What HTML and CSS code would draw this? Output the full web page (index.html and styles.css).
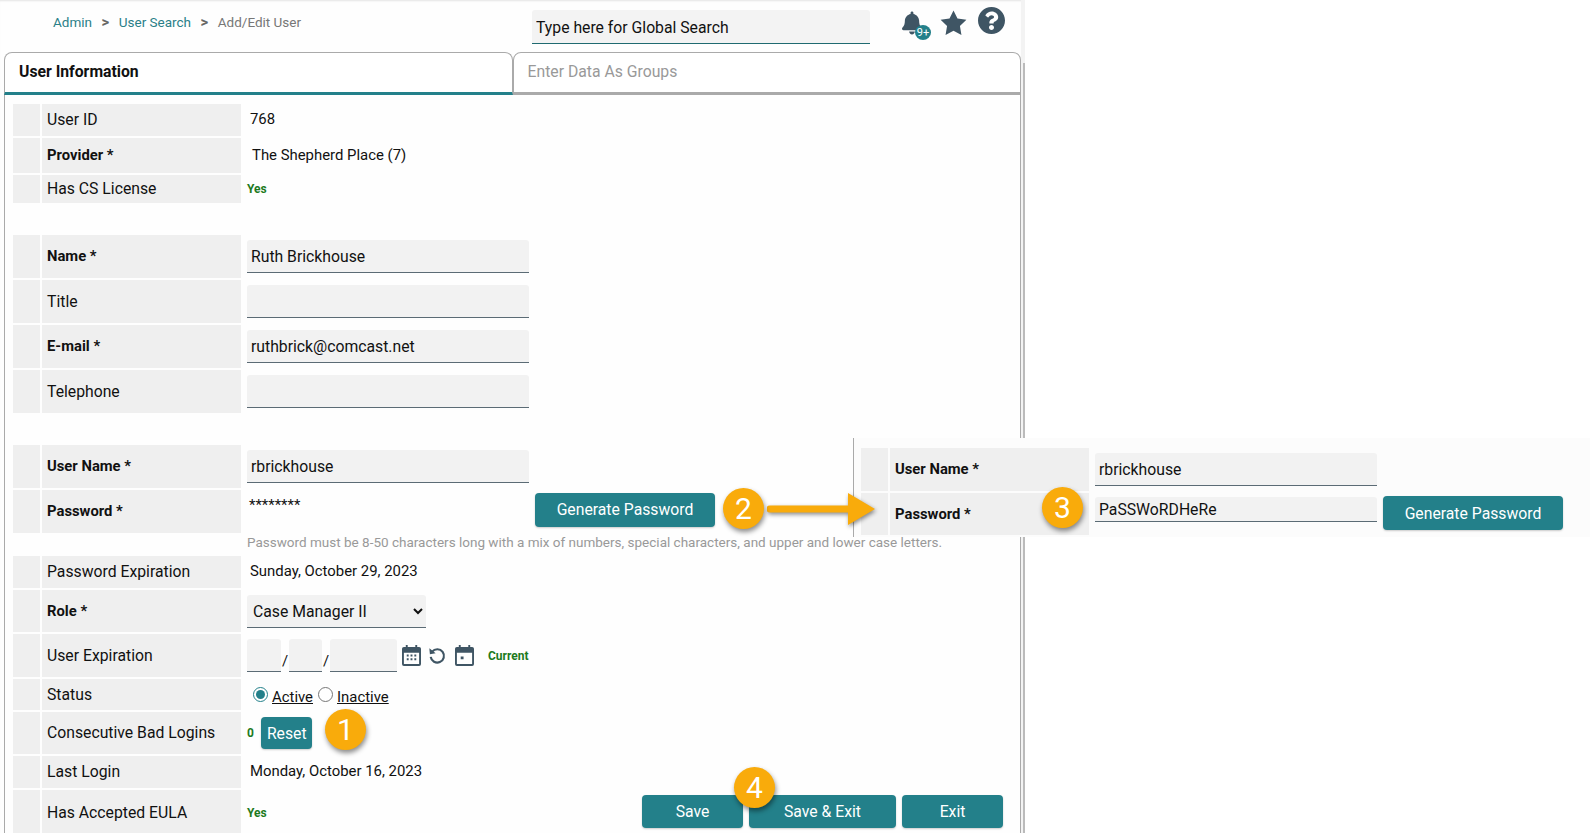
FILE: index.html
```html
<!DOCTYPE html>
<html lang="en">
<head>
    <meta charset="UTF-8">
    <meta name="viewport" content="width=device-width, initial-scale=1.0">
    <title>Add/Edit User</title>
    <link rel="stylesheet" href="styles.css">
</head>
<body>
    <div class="app">
        <header class="topbar">
            <nav class="crumbs">
                <a>Admin</a><b>&gt;</b><a>User Search</a><b>&gt;</b><span>Add/Edit User</span>
            </nav>
            <input class="global-search" type="text" value="Type here for Global Search">
            <div class="top-icons">
                <span class="bell">
                    <svg class="icon-bell" viewBox="0 0 448 512"><path d="M224 512c35.32 0 63.97-28.65 63.97-64H160.03c0 35.35 28.65 64 63.97 64zm215.39-149.71c-19.32-20.76-55.47-51.99-55.47-154.29 0-77.7-54.48-139.9-127.94-155.16V32c0-17.67-14.32-32-31.98-32s-31.98 14.33-31.98 32v20.84C118.56 68.1 64.08 130.3 64.08 208c0 102.3-36.15 133.53-55.47 154.29-6 6.45-8.66 14.16-8.61 21.71.11 16.4 12.98 32 32.1 32h383.8c19.12 0 32-15.6 32.1-32 .05-7.55-2.61-15.27-8.61-21.71z"/></svg>
                    <i class="bell-count">9+</i>
                </span>
                <svg class="icon-star" viewBox="0 0 576 512"><path d="M288 6L367 166 544 192 416 316 446 494 288 410 130 494 160 316 32 192 209 166z"/></svg>
                <svg class="icon-help" viewBox="8 8 496 496"><path d="M504 256c0 136.997-111.043 248-248 248S8 392.997 8 256C8 119.083 119.043 8 256 8s248 111.083 248 248zM262.655 90c-54.497 0-89.255 22.957-116.549 63.758-3.536 5.286-2.353 12.415 2.715 16.258l34.699 26.31c5.205 3.947 12.621 3.008 16.665-2.122 17.864-22.658 30.113-35.797 57.303-35.797 20.429 0 45.698 13.148 45.698 32.958 0 14.976-12.363 22.667-32.534 33.976C247.128 238.528 216 254.941 216 296v4c0 6.627 5.373 12 12 12h56c6.627 0 12-5.373 12-12v-1.333c0-28.462 83.186-29.647 83.186-106.667 0-58.002-60.165-102-116.531-102zM256 338c-25.365 0-46 20.635-46 46 0 25.364 20.635 46 46 46s46-20.636 46-46c0-25.365-20.635-46-46-46z"/></svg>
            </div>
        </header>

        <div class="tabs">
            <div class="tab active">User Information</div>
            <div class="tab">Enter Data As Groups</div>
        </div>

        <main class="panel">
            <div class="row h32">
                <div class="stub"></div><div class="label">User ID</div>
                <div class="value text">768</div>
            </div>
            <div class="row h35">
                <div class="stub"></div><div class="label req">Provider *</div>
                <div class="value text provider">The Shepherd Place (7)</div>
            </div>
            <div class="row h28">
                <div class="stub"></div><div class="label">Has CS License</div>
                <div class="value"><span class="flag">Yes</span></div>
            </div>

            <div class="section">
                <div class="row h43">
                    <div class="stub"></div><div class="label req">Name *</div>
                    <div class="value"><input class="field" type="text" value="Ruth Brickhouse"></div>
                </div>
                <div class="row h43">
                    <div class="stub"></div><div class="label">Title</div>
                    <div class="value"><input class="field" type="text"></div>
                </div>
                <div class="row h43">
                    <div class="stub"></div><div class="label req">E-mail *</div>
                    <div class="value"><input class="field" type="text" value="ruthbrick@comcast.net"></div>
                </div>
                <div class="row h43">
                    <div class="stub"></div><div class="label">Telephone</div>
                    <div class="value"><input class="field" type="text"></div>
                </div>
            </div>

            <div class="section">
                <div class="row h43">
                    <div class="stub"></div><div class="label req">User Name *</div>
                    <div class="value"><input class="field" type="text" value="rbrickhouse"></div>
                </div>
                <div class="row h43">
                    <div class="stub"></div><div class="label req">Password *</div>
                    <div class="value">
                        <span class="masked">********</span>
                        <button class="btn btn-generate">Generate Password</button>
                    </div>
                </div>
                <p class="hint">Password must be 8-50 characters long with a mix of numbers, special characters, and upper and lower case letters.</p>
                <div class="row h32">
                    <div class="stub"></div><div class="label">Password Expiration</div>
                    <div class="value text">Sunday, October 29, 2023</div>
                </div>
                <div class="row h42">
                    <div class="stub"></div><div class="label req">Role *</div>
                    <div class="value">
                        <select class="field role-select"><option>Case Manager II</option></select>
                    </div>
                </div>
                <div class="row h43">
                    <div class="stub"></div><div class="label">User Expiration</div>
                    <div class="value">
                        <input class="field date-part" type="text">
                        <span class="slash">/</span>
                        <input class="field date-part" type="text">
                        <span class="slash">/</span>
                        <input class="field date-year" type="text">
                        <svg class="date-icon cal-1" viewBox="0 0 20 22">
                            <path d="M4 0h2v3H4zM14 0h2v3h-2z"/>
                            <path fill-rule="evenodd" d="M2 2h16a2 2 0 0 1 2 2v16a2 2 0 0 1-2 2H2a2 2 0 0 1-2-2V4a2 2 0 0 1 2-2zM2 8v12h16V8zM5 10h2v2H5zM9 10h2v2H9zM13 10h2v2h-2zM5 14h2v2H5zM9 14h2v2H9zM13 14h2v2h-2z"/>
                        </svg>
                        <svg class="date-icon undo" viewBox="0 0 20 20">
                            <path class="undo-arc" d="M4.6 5.2A7.4 7.4 0 1 1 3 11"/>
                            <path d="M1.500 1.500l.6 6.600 6.400-1.200z"/>
                        </svg>
                        <svg class="date-icon cal-2" viewBox="0 0 20 22">
                            <path d="M4 0h2v3H4zM14 0h2v3h-2z"/>
                            <path fill-rule="evenodd" d="M2 2h16a2 2 0 0 1 2 2v16a2 2 0 0 1-2 2H2a2 2 0 0 1-2-2V4a2 2 0 0 1 2-2zM2 8v12h16V8zM6 12h3v3H6z"/>
                        </svg>
                        <span class="flag current">Current</span>
                    </div>
                </div>
                <div class="row h31">
                    <div class="stub"></div><div class="label">Status</div>
                    <div class="value status">
                        <input type="radio" name="status" checked><u>Active</u>
                        <input type="radio" name="status"><u>Inactive</u>
                    </div>
                </div>
                <div class="row h42">
                    <div class="stub"></div><div class="label">Consecutive Bad Logins</div>
                    <div class="value">
                        <span class="flag">0</span>
                        <button class="btn btn-reset">Reset</button>
                    </div>
                </div>
                <div class="row h32">
                    <div class="stub"></div><div class="label">Last Login</div>
                    <div class="value text">Monday, October 16, 2023</div>
                </div>
                <div class="row h45">
                    <div class="stub"></div><div class="label">Has Accepted EULA</div>
                    <div class="value">
                        <span class="flag">Yes</span>
                        <div class="actions">
                            <button class="btn btn-save">Save</button>
                            <button class="btn btn-save-exit">Save &amp; Exit</button>
                            <button class="btn btn-save">Exit</button>
                        </div>
                    </div>
                </div>
            </div>
        </main>
    </div>

    <div class="scroll-strip"><div class="scroll-thumb"></div></div>

    <!-- annotation overlay: what the password row looks like after Generate -->
    <div class="callout">
        <div class="row h43">
            <div class="stub"></div><div class="label req">User Name *</div>
            <div class="value"><input class="field" type="text" value="rbrickhouse"></div>
        </div>
        <div class="row h42">
            <div class="stub"></div><div class="label req">Password *</div>
            <div class="value">
                <input class="field field-short" type="text" value="PaSSWoRDHeRe">
                <button class="btn btn-generate">Generate Password</button>
            </div>
        </div>
    </div>

    <svg class="arrow" viewBox="0 0 108 36">
        <path d="M3 14.500h78V2l27 16-27 16V21.500H3a3.500 3.500 0 0 1 0-7z"/>
    </svg>
    <span class="step step-1">1</span>
    <span class="step step-2">2</span>
    <span class="step step-3">3</span>
    <span class="step step-4">4</span>
</body>
</html>
```

FILE: styles.css
```css
* {
    box-sizing: border-box;
}
html, body {
    height: 100%;
}
body {
    margin: 0;
    background: #fff;
    color: #111;
    font-family: Roboto, "Liberation Sans", sans-serif;
    font-size: 15.75px;
    overflow: hidden;
    display: flex;
}
.app {
    width: 1021px;
    flex: none;
    padding-left: 4px;
    background: #fefefe;
    box-shadow: inset 0 2px 2px -1px #e4e4e4;
}
.topbar {
    height: 52px;
    display: flex;
    align-items: flex-start;
}
.crumbs {
    width: 528px;
    padding: 14px 0 0 49px;
    font-size: 13.5px;
    line-height: 16px;
    color: #2a7f88;
}
.crumbs b {
    margin: 0 9.500px;
    font-size: 15px;
    font-weight: 700;
    color: #666;
}
.crumbs span {
    color: #777;
}
.global-search {
    width: 338px;
    height: 34px;
    margin-top: 10px;
    padding: 2px 4px 0;
    border: 0;
    border-bottom: 1px solid #1f6a70;
    border-radius: 3px 3px 0 0;
    background: #f3f3f3;
    font: 15.75px Roboto, sans-serif;
    color: #111;
}
.top-icons {
    display: flex;
    align-items: flex-start;
    margin-left: 32px;
    fill: #3f5564;
}
.bell {
    position: relative;
    width: 20px;
    height: 30px;
    margin-top: 10px;
}
.icon-bell {
    width: 20px;
    height: 26px;
    display: block;
}
.bell-count {
    position: absolute;
    left: 13px;
    top: 15px;
    width: 16px;
    height: 15px;
    border-radius: 50%;
    background: #23808a;
    color: #fff;
    font-size: 11px;
    font-style: normal;
    line-height: 15px;
    text-align: center;
}
.icon-star {
    width: 29px;
    height: 26px;
    margin: 10px 0 0 17px;
}
.icon-help {
    width: 27px;
    height: 27px;
    margin: 7px 0 0 10px;
}
.tabs {
    display: flex;
    height: 43px;
}
.tab {
    flex: 1;
    padding: 9px 14px 0;
    border: 1px solid #aaa;
    border-bottom: 3px solid #aaa;
    border-radius: 8px 8px 0 0;
    background: #fff;
    color: #999;
    line-height: 20px;
}
.tab.active {
    border-bottom-color: #23808a;
    color: #111;
    font-weight: 700;
}
.panel {
    padding: 9px 0 0 8px;
    border-left: 1px solid #aaa;
    border-right: 1px solid #aaa;
    height: 740px;
}
.section {
    margin-top: 32px;
}
.row {
    display: grid;
    grid-template-columns: 27px 199px 1fr;
    column-gap: 2px;
    margin-bottom: 2px;
}
.h28 { height: 28px; }
.h31 { height: 31px; }
.h32 { height: 32px; }
.h35 { height: 35px; }
.h42 { height: 42px; }
.h43 { height: 43px; }
.h45 { height: 45px; }
.stub {
    background: #efefef;
}
.label {
    display: flex;
    align-items: center;
    padding: 0 0 1px 5px;
    background: #efefef;
}
.label.req {
    font-size: 14.8px;
    font-weight: 700;
}
.value {
    display: flex;
    align-items: center;
    padding-left: 4px;
    font-size: 14.9px;
}
.value.text {
    padding-left: 7px;
    padding-bottom: 2px;
}
.value.provider {
    padding-left: 9px;
}
.field {
    width: 282px;
    height: 33px;
    padding: 0 4px;
    border: 0;
    border-bottom: 1px solid #5b6b75;
    border-radius: 3px 3px 0 0;
    background: #f2f2f2;
    font: 15.75px Roboto, sans-serif;
    color: #111;
}
.role-select {
    width: 179px;
    padding: 1px 0 0 2px;
}
.masked {
    width: 282px;
    padding-left: 2px;
    margin-bottom: 14px;
}
.btn {
    height: 33px;
    border: 0;
    border-radius: 4px;
    background: #23808a;
    color: #fff;
    font: 15.75px Roboto, sans-serif;
    box-shadow: 0 1px 2px rgba(0, 0, 0, .2);
}
.btn-generate {
    width: 180px;
    height: 34px;
    margin: 0 0 4px 6px;
}
.btn-reset {
    width: 51px;
    height: 32px;
    margin-left: 7px;
}
.flag {
    color: #1d7a1d;
    font-size: 12px;
    font-weight: 700;
}
.hint {
    margin: 0 0 4px 234px;
    height: 17px;
    line-height: 15px;
    font-size: 13.5px;
    color: #999;
    white-space: nowrap;
}
.slash {
    width: 8px;
    text-align: center;
    margin-top: 10px;
}
.date-part {
    width: 34px;
}
.date-part + .slash + .date-part {
    width: 33px;
}
.date-year {
    width: 67px;
}
.date-icon {
    width: 19px;
    height: 21px;
    fill: #3f5564;
}
.cal-1 {
    margin-left: 5px;
}
.undo {
    width: 18px;
    height: 18px;
    margin-left: 7px;
}
.cal-2 {
    margin-left: 9px;
}
.undo-arc {
    fill: none;
    stroke: #3f5564;
    stroke-width: 2.4;
}
.current {
    margin-left: 14px;
}
.status {
    padding-left: 10px;
}
.status input {
    width: 15px;
    height: 15px;
    margin: 0 4px 0 0;
    accent-color: #23808a;
}
.status input + u + input {
    margin-left: 5px;
}
.status u {
    margin-top: 4px;
}
.actions {
    display: flex;
    gap: 6px;
    margin-left: auto;
    margin-right: 17px;
    margin-bottom: 2px;
}
.btn-save {
    width: 101px;
}
.btn-save-exit {
    width: 147px;
}
.scroll-strip {
    width: 4px;
    height: 100%;
    padding: 63px 0 0 2px;
    background: #f3f3f3;
}
.scroll-thumb {
    width: 2px;
    height: 100%;
    background: #bbb;
}
.callout {
    position: absolute;
    left: 853px;
    top: 438px;
    width: 737px;
    height: 99px;
    padding: 10px 0 0 7px;
    border-left: 1px solid #aaa;
    background: #fcfcfc;
}
.callout .field-short {
    height: 25px;
    margin-bottom: 9px;
}
.callout .btn-generate {
    margin-bottom: 2px;
}
.arrow {
    position: absolute;
    left: 767px;
    top: 491px;
    width: 108px;
    height: 36px;
    fill: #f9ab0b;
    filter: drop-shadow(1px 2px 2px rgba(0, 0, 0, .45));
}
.step {
    position: absolute;
    width: 41px;
    height: 41px;
    border-radius: 50%;
    background: #f9ab0b;
    color: #fff;
    font-size: 30px;
    line-height: 41px;
    text-align: center;
    box-shadow: 1px 3px 5px rgba(0, 0, 0, .45);
}
.step-1 { left: 325px; top: 709px; }
.step-2 { left: 723px; top: 488px; }
.step-3 { left: 1042px; top: 487px; }
.step-4 { left: 734px; top: 767px; }
```
